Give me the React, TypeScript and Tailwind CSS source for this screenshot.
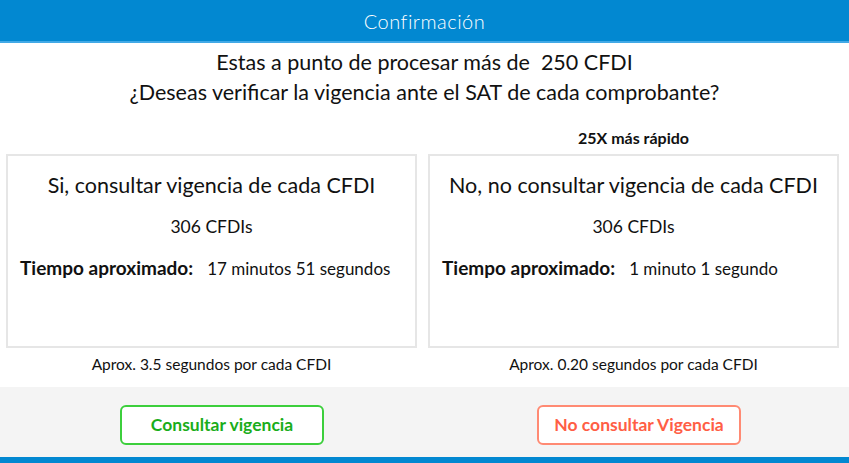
import React from 'react';

const font = { fontFamily: 'Lato, "Open Sans", sans-serif' };

interface OptionProps {
  title: string;
  count: string;
  time: string;
  note: string;
  badge?: string;
}

const OptionCard: React.FC<OptionProps> = ({ title, count, time, note, badge }) => {
  return (
    <div className="flex flex-col flex-1">
      <div className="h-[47px] flex items-end justify-center pb-[5px]">
        {badge && <span className="text-[16px] leading-[22px] font-bold text-[#111]">{badge}</span>}
      </div>
      <div className="h-[194px] border-2 border-[#e6e6e6] px-[12px] pt-[14px]">
        <div className="text-center text-[21.5px] text-[#111] leading-[30px]">{title}</div>
        <div className="text-center text-[17.5px] text-[#111] mt-[16px] leading-[22px]">{count}</div>
        <div className="flex items-baseline mt-[18px] text-[#111] leading-[24px]">
          <span className="text-[19px] font-bold">Tiempo aproximado:</span>
          <span className="text-[17px] ml-[14px]">{time}</span>
        </div>
      </div>
      <div className="text-center text-[15.5px] leading-[22px] text-[#111] mt-[5px]">{note}</div>
    </div>
  );
};

export default function App() {
  return (
    <div className="w-[849px] h-[463px] bg-white flex flex-col overflow-hidden" style={font}>
      {/* Header */}
      <div className="h-[41px] bg-[#0288d1] flex items-center justify-center">
        <span className="text-white text-[20px] font-light tracking-wide">Confirmación</span>
      </div>
      <div className="h-[2px] bg-[#42a9e6]"></div>

      {/* Question */}
      <div className="text-center text-[21.5px] text-[#111] leading-[30px] pt-[4px]">
        <div>Estas a punto de procesar más de&nbsp; 250 CFDI</div>
        <div>¿Deseas verificar la vigencia ante el SAT de cada comprobante?</div>
      </div>

      {/* Options */}
      <div className="flex gap-[11px] pl-[6px] pr-[10px]">
        <OptionCard
          title="Si, consultar vigencia de cada CFDI"
          count="306 CFDIs"
          time="17 minutos 51 segundos"
          note="Aprox. 3.5 segundos por cada CFDI"
        />
        <OptionCard
          badge="25X más rápido"
          title="No, no consultar vigencia de cada CFDI"
          count="306 CFDIs"
          time="1 minuto 1 segundo"
          note="Aprox. 0.20 segundos por cada CFDI"
        />
      </div>

      {/* Footer */}
      <div className="mt-auto h-[70px] bg-[#f4f4f4] flex items-start pt-[18px] pl-[120px] gap-[213px]">
        <button className="w-[204px] h-[40px] rounded-[6px] border-2 border-[#3ccf3c] bg-white text-[#1aad1a] text-[17.5px] font-bold">
          Consultar vigencia
        </button>
        <button className="w-[204px] h-[40px] rounded-[6px] border-2 border-[#ff8a73] bg-white text-[#ff5e45] text-[17.5px] font-bold">
          No consultar Vigencia
        </button>
      </div>
      <div className="h-[6px] bg-[#0288d1]"></div>
    </div>
  );
}
